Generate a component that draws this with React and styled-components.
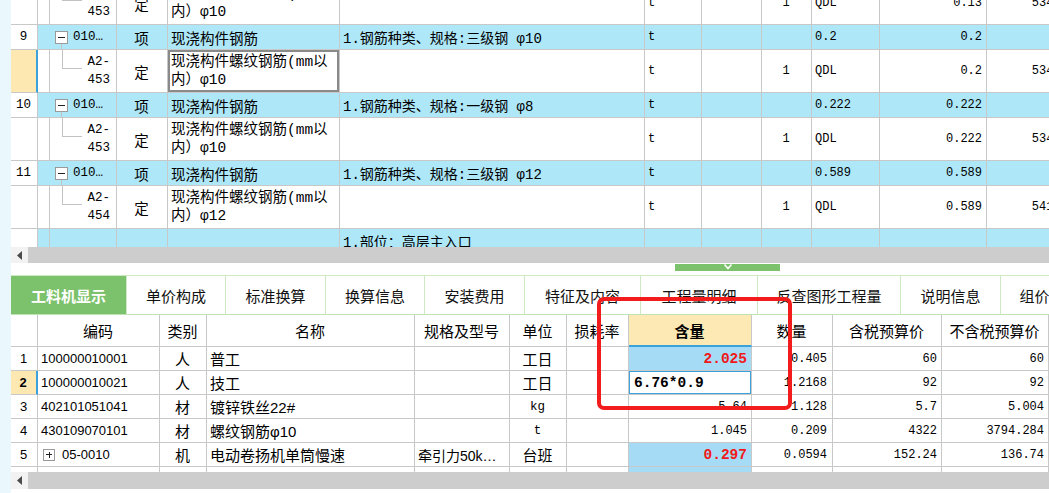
import React from 'react';
import styled, { createGlobalStyle } from 'styled-components';

const GlobalStyle = createGlobalStyle`
  html, body { margin: 0; padding: 0; background: #fff; overflow: hidden; }
  body { font-family: "Noto Sans CJK SC", sans-serif; color: #000; }
`;

const FONTS = {
  cjk: `"Noto Sans CJK SC", sans-serif`,
  mix: `"Liberation Mono", "Noto Sans CJK SC", monospace`,
  mono: `"Liberation Mono", "Noto Sans CJK SC", monospace`,
  sans: `"Liberation Sans", "Noto Sans CJK SC", sans-serif`,
};
const SIZES = { cjk: 14.5, mix: 14.5, mono: 12, sans: 13 };

const GRID = '#c8c8c8';
const ITEM_BLUE = '#aee7f8';
const QTY_BLUE = '#a6dbf5';
const YELLOW = '#fde8b2';
const SEL_BLUE = '#3ba1dc';

const Page = styled.div`
  position: relative;
  display: flex;
  width: 1049px;
  height: 493px;
  overflow: hidden;
`;

const LeftStrip = styled.div`
  width: 11px;
  flex: none;
  background: #eaf7fc;
`;

const Main = styled.div`
  flex: 1;
  min-width: 0;
  display: flex;
  flex-direction: column;
  overflow: hidden;
`;

const TopGrid = styled.div`
  flex: none;
  height: 247px;
  overflow: hidden;
`;

const Scrolled = styled.div`
  margin-top: -18px;
`;

const Row = styled.div`
  display: grid;
  grid-template-columns: ${({ $cols }) => $cols};
  height: ${({ $h }) => $h}px;
`;

const Cell = styled.div`
  box-sizing: border-box;
  position: relative;
  display: flex;
  align-items: center;
  justify-content: ${({ $align }) =>
    $align === 'right' ? 'flex-end' : $align === 'center' ? 'center' : 'flex-start'};
  padding: 0 ${({ $pr }) => ($pr ?? 4)}px 0 ${({ $pl }) => ($pl ?? 3)}px;
  border-right: ${({ $noRight, $blueRight }) =>
    $noRight ? 'none' : $blueRight ? `2px solid ${SEL_BLUE}` : `1px solid ${GRID}`};
  border-bottom: ${({ $blueBottom }) => ($blueBottom ? `2px solid ${SEL_BLUE}` : `1px solid ${GRID}`)};
  background: ${({ $bg }) => $bg || 'transparent'};
  font-family: ${({ $font }) => FONTS[$font || 'cjk']};
  font-size: ${({ $font, $size }) => $size || SIZES[$font || 'cjk']}px;
  font-weight: ${({ $bold }) => ($bold ? 700 : 400)};
  color: ${({ $color }) => $color || '#000'};
  white-space: nowrap;
  overflow: hidden;
  box-shadow: ${({ $selected, $editing }) =>
    $selected ? 'inset 0 0 0 2px #8a8a8a' : $editing ? `inset 0 0 0 1px ${SEL_BLUE}` : 'none'};

  ${({ $tree }) =>
    $tree === 'sub'
      ? `&::before { content: ''; position: absolute; left: 12px; top: 0; width: 19px; height: 18px;
          border-left: 1px solid #c2c2c2; border-bottom: 1px solid #c2c2c2; }`
      : $tree === 'item'
      ? `&::before { content: ''; position: absolute; left: 11px; top: 18px; width: 0; height: 7px;
          border-left: 1px solid #c2c2c2; }`
      : ''}
`;

const Lines = styled.div`
  display: flex;
  flex-direction: column;
  align-items: ${({ $right }) => ($right ? 'flex-end' : 'flex-start')};
  line-height: 18px;
`;

const TreeBox = styled.span`
  position: relative;
  flex: none;
  box-sizing: border-box;
  width: ${({ $s }) => $s}px;
  height: ${({ $s }) => $s}px;
  margin-right: ${({ $gap }) => $gap}px;
  border: 1px solid #9a9a9a;
  background: #fff;
  &::after {
    content: '';
    position: absolute;
    left: 2px;
    right: 2px;
    top: 50%;
    height: 1px;
    margin-top: -0.5px;
    background: #222;
  }
  ${({ $plus }) =>
    $plus
      ? `&::before { content: ''; position: absolute; top: 2px; bottom: 2px; left: 50%; width: 1px;
          margin-left: -0.5px; background: #222; }`
      : ''}
`;

const ScrollBar = styled.div`
  flex: none;
  height: ${({ $h }) => $h}px;
  display: flex;
  background: #cdcdcd;
`;

const ScrollBtn = styled.div`
  width: 17px;
  flex: none;
  display: flex;
  align-items: center;
  justify-content: center;
  background: #f2f2f2;
`;

const Splitter = styled.div`
  flex: none;
  height: 12px;
  box-sizing: border-box;
  padding: 1px 0 0 664px;
  background: #fff;
`;

const Grip = styled.div`
  width: 105px;
  height: 7px;
  background: #7cc16b;
  display: flex;
  justify-content: center;
  align-items: flex-start;
`;

const TabBar = styled.div`
  flex: none;
  height: 40px;
  box-sizing: border-box;
  display: flex;
  border-top: 1px solid #cde9c4;
  border-bottom: 1px solid #bfe3b4;
  background: #fff;
`;

const Tab = styled.div`
  flex: none;
  width: ${({ $w }) => $w}px;
  box-sizing: border-box;
  display: flex;
  align-items: center;
  justify-content: center;
  border-right: 1px solid #cde9c4;
  background: ${({ $active }) => ($active ? '#7cc16b' : '#fff')};
  color: ${({ $active }) => ($active ? '#fff' : '#111')};
  font-family: "Noto Sans CJK SC", sans-serif;
  font-size: 15px;
  font-weight: ${({ $active }) => ($active ? 700 : 400)};
  white-space: nowrap;
  overflow: hidden;
`;

const BottomGrid = styled.div`
  flex: none;
  height: 157px;
  overflow: hidden;
`;

const BottomPad = styled.div`
  flex: 1;
  background: #fff;
`;

const RedMark = styled.div`
  position: absolute;
  left: 597px;
  top: 297px;
  width: 195px;
  height: 113px;
  box-sizing: border-box;
  border: 4px solid #f21c1c;
  border-radius: 7px;
  pointer-events: none;
`;

const TOP_COLS = '27px 12px 67px 51px 172px 305px 57px 60px 50px 68px 107px 93px';
const BOT_COLS = '27px 122px 47px 208px 95px 57px 62px 123px 81px 109px 107px';

const topRows = [
  { t: 'sub', code: '453', name: '内）φ10', c11: '0.13', c12: '534.22' },
  { t: 'item', no: '9', desc: '1.钢筋种类、规格:三级钢 φ10', v: '0.2' },
  { t: 'sub', code: '453', name: '内）φ10', c11: '0.2', c12: '534.22', sel: true },
  { t: 'item', no: '10', desc: '1.钢筋种类、规格:一级钢 φ8', v: '0.222' },
  { t: 'sub', code: '453', name: '内）φ10', c11: '0.222', c12: '534.22' },
  { t: 'item', no: '11', desc: '1.钢筋种类、规格:三级钢 φ12', v: '0.589' },
  { t: 'sub', code: '454', name: '内）φ12', c11: '0.589', c12: '541.28' },
  { t: 'part', desc: '1.部位：高层主入口' },
];

function TopRowView({ r }) {
  if (r.t === 'sub') {
    return (
      <Row $cols={TOP_COLS} $h={43}>
        <Cell $bg={r.sel ? YELLOW : undefined} $blueRight={r.sel} />
        <Cell />
        <Cell $align="right" $pr={6} $font="mono" $size={12.5} $tree="sub">
          <Lines $right>
            <span>A2-</span>
            <span>{r.code}</span>
          </Lines>
        </Cell>
        <Cell $align="center">定</Cell>
        <Cell $font="mix" $selected={r.sel}>
          <Lines>
            <span>现浇构件螺纹钢筋(mm以</span>
            <span>{r.name}</span>
          </Lines>
        </Cell>
        <Cell />
        <Cell $font="mono">t</Cell>
        <Cell />
        <Cell $align="center" $font="mono">1</Cell>
        <Cell $font="mono">QDL</Cell>
        <Cell $align="right" $font="mono">{r.c11}</Cell>
        <Cell $align="right" $font="mono">{r.c12}</Cell>
      </Row>
    );
  }
  const part = r.t === 'part';
  return (
    <Row $cols={TOP_COLS} $h={25}>
      <Cell $align="center" $font="mono" $size={12.5}>{r.no}</Cell>
      <Cell $bg={ITEM_BLUE} $noRight={!part} />
      <Cell $bg={ITEM_BLUE} $pl={5} $font="mono" $size={12.5} $tree={part ? undefined : 'item'}>
        {!part && (
          <>
            <TreeBox $s={13} $gap={5} />
            010…
          </>
        )}
      </Cell>
      <Cell $bg={ITEM_BLUE} $align="center">{part ? '' : '项'}</Cell>
      <Cell $bg={ITEM_BLUE}>{part ? '' : '现浇构件钢筋'}</Cell>
      <Cell $bg={ITEM_BLUE} $font="mix" $size={14}>{r.desc}</Cell>
      <Cell $bg={ITEM_BLUE} $font="mono">{part ? '' : 't'}</Cell>
      <Cell $bg={ITEM_BLUE} />
      <Cell $bg={ITEM_BLUE} />
      <Cell $bg={ITEM_BLUE} $font="mono">{r.v}</Cell>
      <Cell $bg={ITEM_BLUE} $align="right" $font="mono">{r.v}</Cell>
      <Cell $bg={ITEM_BLUE} />
    </Row>
  );
}

const headers = ['', '编码', '类别', '名称', '规格及型号', '单位', '损耗率', '含量', '数量', '含税预算价', '不含税预算价'];

const botRows = [
  { no: '1', code: '100000010001', kind: '人', name: '普工', spec: '', unit: '工日', qty: '2.025', hot: true, amt: '0.405', p1: '60', p2: '60' },
  { no: '2', code: '100000010021', kind: '人', name: '技工', spec: '', unit: '工日', qty: '6.76*0.9', edit: true, amt: '1.2168', p1: '92', p2: '92' },
  { no: '3', code: '402101051041', kind: '材', name: '镀锌铁丝22#', spec: '', unit: 'kg', qty: '5.64', amt: '1.128', p1: '5.7', p2: '5.004' },
  { no: '4', code: '430109070101', kind: '材', name: '螺纹钢筋φ10', spec: '', unit: 't', qty: '1.045', amt: '0.209', p1: '4322', p2: '3794.284' },
  { no: '5', code: '05-0010', box: true, kind: '机', name: '电动卷扬机单筒慢速', spec: '牵引力50k…', unit: '台班', qty: '0.297', hot: true, amt: '0.0594', p1: '152.24', p2: '136.74' },
  { no: '6', code: '05-0011', box: true, kind: '机', name: '电动卷扬机单筒快速', spec: '牵引力10k…', unit: '台班', qty: '0.108', hot: true, amt: '0.0216', p1: '98.4', p2: '88.12' },
];

function BottomRowView({ r }) {
  const sel = r.edit;
  const latinUnit = r.unit === 'kg' || r.unit === 't';
  return (
    <Row $cols={BOT_COLS} $h={24}>
      <Cell $align="center" $font="sans" $bold={sel} $bg={sel ? YELLOW : undefined} $blueRight={sel}>
        {r.no}
      </Cell>
      <Cell $font="sans" $pl={r.box ? 5 : 3}>
        {r.box && <TreeBox $s={12} $gap={7} $plus />}
        {r.code}
      </Cell>
      <Cell $align="center" $size={15}>{r.kind}</Cell>
      <Cell $font="sans" $size={15}>{r.name}</Cell>
      <Cell $font="sans" $size={14}>{r.spec}</Cell>
      <Cell $align="center" $font={latinUnit ? 'mono' : 'cjk'} $size={latinUnit ? 12.5 : 15}>{r.unit}</Cell>
      <Cell />
      {r.edit ? (
        <Cell $editing $bg="#fff" $pl={5} $font="mono" $size={14.5} $bold>{r.qty}</Cell>
      ) : r.hot ? (
        <Cell $bg={QTY_BLUE} $align="right" $font="mono" $size={14.5} $bold $color="#f01818">{r.qty}</Cell>
      ) : (
        <Cell $align="right" $font="mono">{r.qty}</Cell>
      )}
      <Cell $align="right" $pr={5} $font="mono">{r.amt}</Cell>
      <Cell $align="right" $pr={4} $font="mono">{r.p1}</Cell>
      <Cell $align="right" $pr={4} $font="mono">{r.p2}</Cell>
    </Row>
  );
}

const tabs = [
  ['工料机显示', 116, true],
  ['单价构成', 99],
  ['标准换算', 100],
  ['换算信息', 99],
  ['安装费用', 100],
  ['特征及内容', 116],
  ['工程量明细', 117],
  ['反查图形工程量', 143],
  ['说明信息', 100],
  ['组价', 68],
];

function HScroll({ h }) {
  return (
    <ScrollBar $h={h}>
      <ScrollBtn>
        <svg width="6" height="9" viewBox="0 0 6 9">
          <polygon points="5,0 0,4.5 5,9" fill="#4a4a4a" />
        </svg>
      </ScrollBtn>
    </ScrollBar>
  );
}

export default function App() {
  return (
    <>
      <GlobalStyle />
      <Page>
        <LeftStrip />
        <Main>
          <TopGrid>
            <Scrolled>
              {topRows.map((r, i) => (
                <TopRowView key={i} r={r} />
              ))}
            </Scrolled>
          </TopGrid>
          <HScroll h={16} />
          <Splitter>
            <Grip>
              <svg width="10" height="6" viewBox="0 0 10 6">
                <polyline points="1.5,0.5 5,4.5 8.5,0.5" fill="none" stroke="#fff" strokeWidth="1.5" />
              </svg>
            </Grip>
          </Splitter>
          <TabBar>
            {tabs.map(([label, w, active]) => (
              <Tab key={label} $w={w} $active={active}>
                {label}
              </Tab>
            ))}
          </TabBar>
          <BottomGrid>
            <Row $cols={BOT_COLS} $h={32}>
              {headers.map((h, i) =>
                h === '含量' ? (
                  <Cell key={i} $align="center" $size={15} $bold $bg="#fde9b3" $blueBottom>
                    {h}
                  </Cell>
                ) : (
                  <Cell key={i} $align="center" $size={15}>
                    {h}
                  </Cell>
                )
              )}
            </Row>
            {botRows.map((r) => (
              <BottomRowView key={r.no} r={r} />
            ))}
          </BottomGrid>
          <HScroll h={17} />
          <BottomPad />
        </Main>
        <RedMark />
      </Page>
    </>
  );
}
